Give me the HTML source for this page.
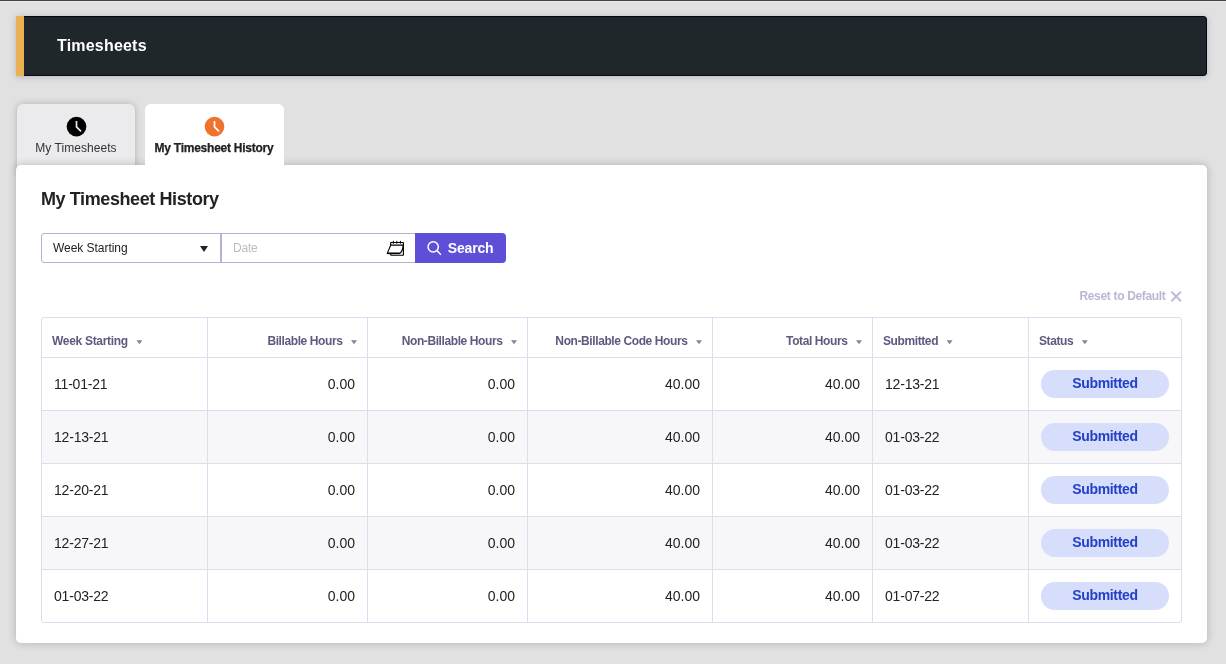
<!DOCTYPE html>
<html lang="en">
<head>
<meta charset="utf-8">
<title>Timesheets</title>
<style>
*{box-sizing:border-box;margin:0;padding:0}
html,body{width:1226px;height:664px;overflow:hidden}
body{background:#e1e1e1;font-family:"Liberation Sans",Arial,sans-serif;color:#222;position:relative}
.header,.tab,.panel{will-change:transform}
.topline{position:absolute;left:0;top:0;width:1226px;height:1px;background:#454649;box-shadow:0 1px 0 #e9e9e9}
.header{position:absolute;left:16px;top:16px;width:1191px;height:60px;background:#20272b;border:1px solid #05081c;border-left:0;border-radius:0 4px 4px 0;box-shadow:0 1px 6px rgba(60,60,90,.25)}
.header:before{content:"";position:absolute;left:0;top:-1px;bottom:-1px;width:8px;background:#eab054}
.header h1{position:absolute;left:41px;top:19px;font-size:16px;line-height:20px;font-weight:bold;color:#fff;letter-spacing:.2px;white-space:nowrap}
.tab{position:absolute;top:104px;height:70px;border-radius:6px 6px 0 0;text-align:center}
.tab1{left:17px;width:118px;background:#ebebed;box-shadow:0 0 7px rgba(0,0,0,.22)}
.tab2{left:145px;width:139px;background:#fff;z-index:3}
.tab svg{position:absolute;top:11px}
.tab1 svg{left:48px}
.tab2 svg{left:58px}
.tab span{position:absolute;left:0;right:0;top:37px;font-size:12px;line-height:14px;white-space:nowrap}
.tab1 span{color:#333;letter-spacing:.05px}
.tab2 span{font-weight:bold;color:#222;letter-spacing:-.25px;left:-1px;-webkit-text-stroke:.25px #222}
.panel{position:absolute;left:16px;top:165px;width:1191px;height:478px;background:#fff;border-radius:5px;box-shadow:0 0 8px rgba(5,5,30,.22);z-index:2}
.panel h2{position:absolute;left:25px;top:23px;font-size:18px;line-height:22px;font-weight:bold;color:#222;white-space:nowrap;letter-spacing:-.4px}
.sel{position:absolute;left:25px;top:68px;width:180px;height:30px;border:1px solid #b4b2d2;border-radius:3px 0 0 3px;font-size:12px;line-height:28px;padding-left:11px;color:#222;letter-spacing:-.04px}
.sel i{position:absolute;right:12px;top:12px;border:4px solid transparent;border-top:6px solid #222;border-bottom:0}
.date{position:absolute;left:205px;top:68px;width:195px;height:30px;border:1px solid #b4b2d2;letter-spacing:-.2px;font-size:12px;line-height:28px;padding-left:11px;color:#bbb}
.date svg{position:absolute;left:164px;top:6px}
.btn{position:absolute;left:399px;top:68px;width:91px;height:30px;background:#5f4fd8;border-radius:0 4px 4px 0;color:#fff;font-weight:bold;font-size:14px;line-height:31px;padding-left:32.7px;letter-spacing:-.15px}
.btn svg{position:absolute;left:12px;top:7px}
.reset{position:absolute;right:25px;top:124px;font-size:12px;line-height:14px;font-weight:bold;color:#b9b7d5;padding-right:16.5px;white-space:nowrap;letter-spacing:-.33px}
.reset svg{position:absolute;right:0;top:1px}
.tw{position:absolute;left:25px;top:152px;width:1141px;height:306px;border:1px solid #dedcee;border-radius:3px;overflow:hidden}
table{width:1139px;border-collapse:separate;border-spacing:0;table-layout:fixed}
th,td{border:0 solid #dedcee;border-width:0 1px 1px 0;white-space:nowrap}
th:last-child,td:last-child{border-right:0}
tr:last-child td{border-bottom:0;height:52px}
th{height:40px;font-size:12px;font-weight:bold;color:#5d5a7e;text-align:left;letter-spacing:-.4px;padding:7px 10px 0 10px}
th.r,td.r{text-align:right}
th.r{padding-right:10px}
th i{display:inline-block;width:6px;height:4px;margin-left:8.5px;background:#8482a0;clip-path:polygon(0 0,100% 0,50% 100%);position:relative;top:-.8px}
td{height:53px;font-size:14px;color:#222;padding:0 12px;letter-spacing:-.2px}
td.r{letter-spacing:0}
tr:nth-child(odd) td{background:#f7f7f9}
.pill{display:block;width:128px;height:28px;border-radius:14px;background:#d6defb;color:#2340c6;font-weight:bold;font-size:14px;line-height:27px;text-align:center;letter-spacing:-.35px}
</style>
</head>
<body>
<div class="topline"></div>
<div class="header"><h1>Timesheets</h1></div>

<div class="tab tab1">
<svg width="23" height="23" viewBox="0 0 23 23"><circle cx="11.5" cy="11.6" r="9.85" fill="#000"/><path d="M11.5 6.1V11.9L16 16.4" fill="none" stroke="#ebebed" stroke-width="1.7"/></svg>
<span>My Timesheets</span>
</div>
<div class="tab tab2">
<svg width="23" height="23" viewBox="0 0 23 23"><circle cx="11.5" cy="11.6" r="9.85" fill="#f0722f"/><path d="M11.5 6.1V11.9L16 16.4" fill="none" stroke="#fff" stroke-width="1.7"/></svg>
<span>My Timesheet History</span>
</div>

<div class="panel">
<h2>My Timesheet History</h2>
<div class="sel">Week Starting<i></i></div>
<div class="date">Date
<svg width="19" height="17" viewBox="0 0 19 17" fill="none" stroke="#000" stroke-width="1.15"><rect x="4.7" y="2.5" width="12.7" height="12.7" rx=".4"/><path d="M7.4 .9V3.7M10.9 .9V3.7M14.4 .9V3.7" stroke-width="1"/><path d="M4.7 5.1H17.2C16.7 9.5 15.6 12.6 13.6 13.4H1.3Z" fill="#fff" stroke-linejoin="round"/><path d="M1.3 13.4H13.4" stroke-width="1.5"/></svg>
</div>
<div class="btn"><svg width="16" height="16" viewBox="0 0 16 16" fill="none" stroke="#fff" stroke-width="1.5"><circle cx="6.2" cy="6.8" r="5.15"/><path d="M9.9 10.5L13.9 14.7"/></svg>Search</div>
<div class="reset">Reset to Default<svg width="12" height="13" viewBox="0 0 12 13" stroke="#bcbad7" stroke-width="2" fill="none"><path d="M1.4 1.6L10.9 11.2M10.9 1.6L1.4 11.2"/></svg></div>

<div class="tw"><table>
<colgroup><col style="width:166px"><col style="width:160px"><col style="width:160px"><col style="width:185px"><col style="width:160px"><col style="width:156px"><col style="width:152px"></colgroup>
<tr><th style="letter-spacing:-.3px">Week Starting<i></i></th><th class="r">Billable Hours<i></i></th><th class="r">Non-Billable Hours<i></i></th><th class="r">Non-Billable Code Hours<i></i></th><th class="r">Total Hours<i></i></th><th>Submitted<i></i></th><th>Status<i></i></th></tr>
<tr><td>11-01-21</td><td class="r">0.00</td><td class="r">0.00</td><td class="r">40.00</td><td class="r">40.00</td><td>12-13-21</td><td><span class="pill">Submitted</span></td></tr>
<tr><td>12-13-21</td><td class="r">0.00</td><td class="r">0.00</td><td class="r">40.00</td><td class="r">40.00</td><td>01-03-22</td><td><span class="pill">Submitted</span></td></tr>
<tr><td>12-20-21</td><td class="r">0.00</td><td class="r">0.00</td><td class="r">40.00</td><td class="r">40.00</td><td>01-03-22</td><td><span class="pill">Submitted</span></td></tr>
<tr><td>12-27-21</td><td class="r">0.00</td><td class="r">0.00</td><td class="r">40.00</td><td class="r">40.00</td><td>01-03-22</td><td><span class="pill">Submitted</span></td></tr>
<tr><td>01-03-22</td><td class="r">0.00</td><td class="r">0.00</td><td class="r">40.00</td><td class="r">40.00</td><td>01-07-22</td><td><span class="pill">Submitted</span></td></tr>
</table></div>
</div>
</body>
</html>
